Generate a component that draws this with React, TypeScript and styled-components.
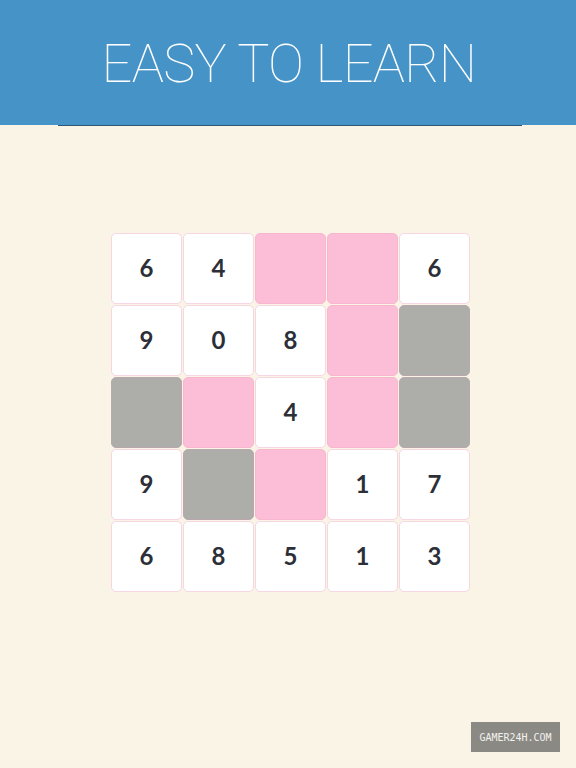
import styled, { createGlobalStyle } from 'styled-components';

const GlobalStyle = createGlobalStyle`
  html, body {
    margin: 0;
    padding: 0;
    background: #f9f4e6;
  }
`;

type Kind = 'num' | 'pink' | 'gray';

interface CellData {
  kind: Kind;
  value?: number;
}

const n = (value: number): CellData => ({ kind: 'num', value });
const P: CellData = { kind: 'pink' };
const G: CellData = { kind: 'gray' };

const board: CellData[][] = [
  [n(6), n(4), P, P, n(6)],
  [n(9), n(0), n(8), P, G],
  [G, P, n(4), P, G],
  [n(9), G, P, n(1), n(7)],
  [n(6), n(8), n(5), n(1), n(3)],
];

const Page = styled.div`
  position: relative;
  width: 576px;
  height: 768px;
  background: #f9f4e6;
  overflow: hidden;
`;

const Header = styled.header`
  height: 125px;
  background: #4693c8;
  display: flex;
  align-items: center;
  justify-content: center;
`;

const Title = styled.h1`
  margin: 0;
  padding: 2px 0 0 2px;
  font-family: Roboto, Inter, 'Liberation Sans', sans-serif;
  font-weight: 100;
  font-size: 54px;
  letter-spacing: -0.7px;
  color: #ffffff;
`;

const Rule = styled.div`
  height: 1px;
  margin: 0 54px 0 58px;
  background: #2c5777;
`;

const Board = styled.div`
  margin: 107px 0 0 111px;
  display: grid;
  grid-template-columns: repeat(5, 71px);
  grid-auto-rows: 71px;
  gap: 1px;
`;

const Cell = styled.div<{ $kind: Kind }>`
  box-sizing: border-box;
  border-radius: 5px;
  display: flex;
  align-items: center;
  justify-content: center;
  padding-bottom: 2px;
  font-family: Lato, 'Open Sans', sans-serif;
  font-weight: 700;
  font-size: 24px;
  color: #2d2f38;
  background: ${(p) =>
    p.$kind === 'pink' ? '#fbbed6' : p.$kind === 'gray' ? '#adada9' : '#ffffff'};
  border: 1px solid
    ${(p) =>
      p.$kind === 'pink' ? '#f8b6cf' : p.$kind === 'gray' ? '#b9a9ae' : '#f6d6e2'};
`;

const Watermark = styled.div`
  position: absolute;
  left: 471px;
  top: 722px;
  width: 89px;
  height: 30px;
  background: #8b8984;
  color: #f2f2ee;
  display: flex;
  align-items: center;
  justify-content: center;
  font-family: 'DejaVu Sans Mono', 'Liberation Mono', monospace;
  font-size: 10px;
`;

export default function App() {
  return (
    <Page>
      <GlobalStyle />
      <Header>
        <Title>EASY TO LEARN</Title>
      </Header>
      <Rule />
      <Board>
        {board.flat().map((cell, i) => (
          <Cell key={i} $kind={cell.kind}>
            {cell.kind === 'num' ? cell.value : null}
          </Cell>
        ))}
      </Board>
      <Watermark>GAMER24H.COM</Watermark>
    </Page>
  );
}
